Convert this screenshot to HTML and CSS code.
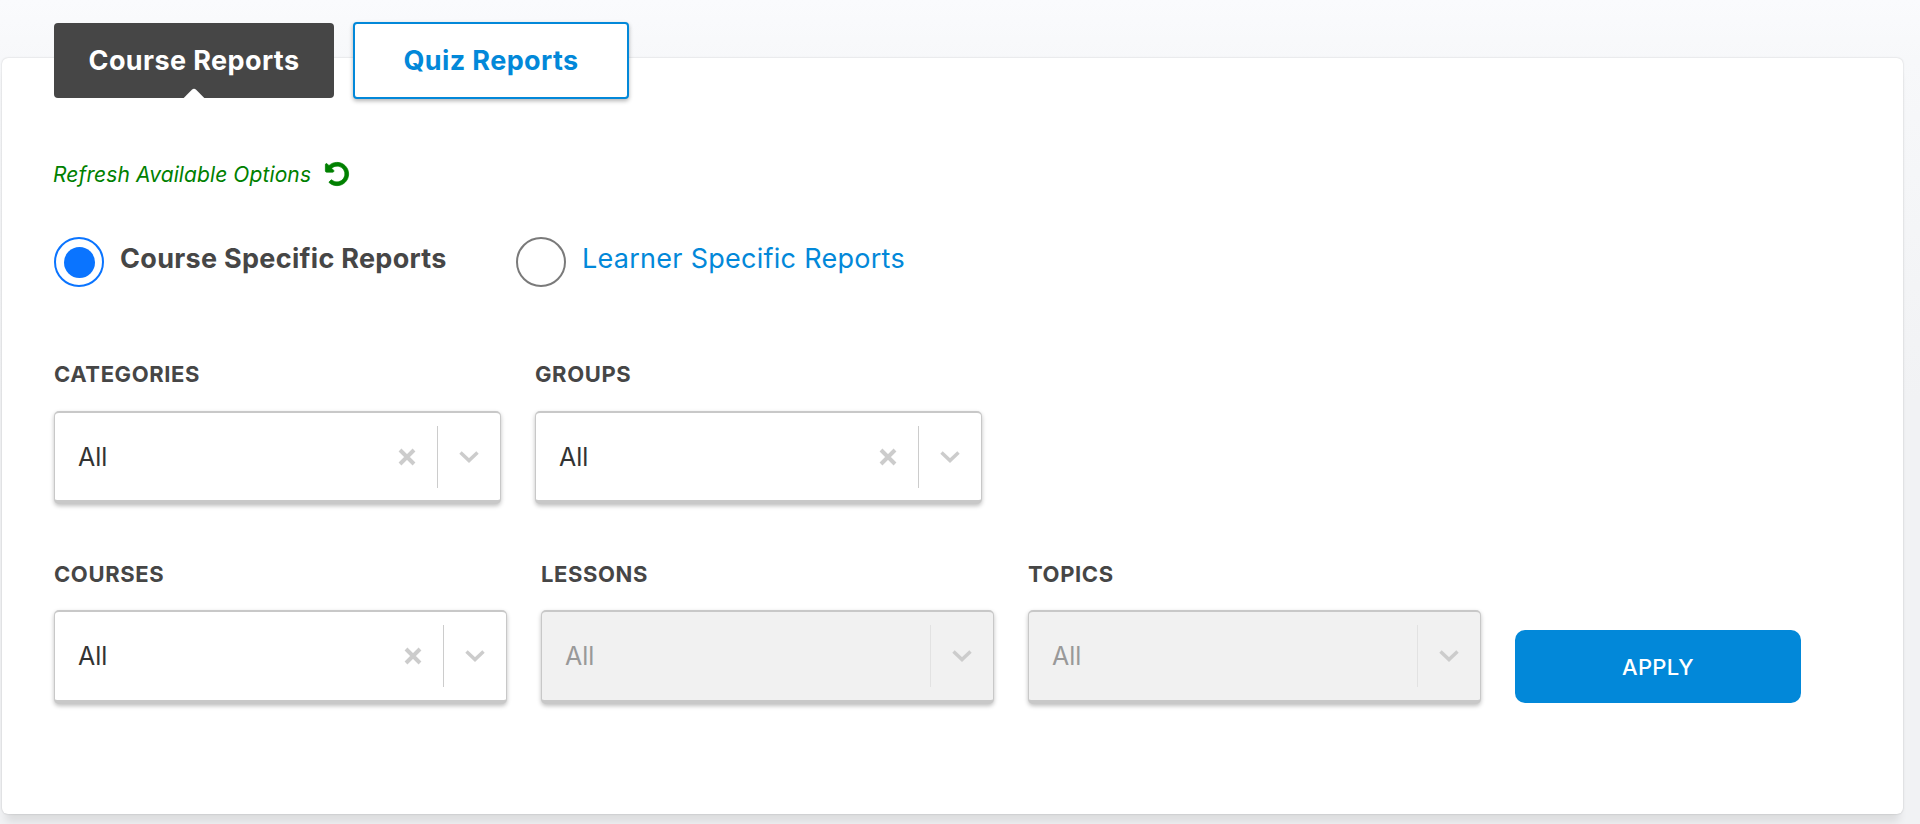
FILE: index.html
```html
<!DOCTYPE html>
<html lang="en">
<head>
<meta charset="utf-8">
<title>Reports</title>
<link rel="stylesheet" href="styles.css">
</head>
<body>
<main class="page">
  <nav class="tabs">
    <a class="tab tab-active">Course Reports</a>
    <a class="tab tab-idle">Quiz Reports</a>
  </nav>
  <section class="card">
    <div class="refresh">
      <span class="refresh-text">Refresh Available Options</span>
      <svg class="refresh-icon" viewBox="0 0 512 512"><path d="M255.545 8c-66.269.119-126.438 26.233-170.86 68.685L48.971 40.971C33.851 25.851 8 36.559 8 57.941V192c0 13.255 10.745 24 24 24h134.059c21.382 0 32.09-25.851 16.971-40.971l-41.75-41.75c30.864-28.899 70.801-44.907 113.23-45.273 92.398-.798 170.283 73.977 169.484 169.442C423.236 348.009 349.816 424 256 424c-41.127 0-79.997-14.678-110.63-41.556-4.743-4.161-11.906-3.908-16.368.553L89.34 422.659c-4.872 4.872-4.631 12.815.482 17.433C133.798 479.813 192.074 504 256 504c136.966 0 247.999-111.033 248-247.998C504.001 119.193 392.354 7.755 255.545 8z"/></svg>
    </div>
    <div class="radios">
      <label class="radio-item radio-first">
        <span class="radio radio-on"><span class="radio-dot"></span></span>
        <span class="radio-label label-on">Course Specific Reports</span>
      </label>
      <label class="radio-item">
        <span class="radio radio-off"></span>
        <span class="radio-label label-off">Learner Specific Reports</span>
      </label>
    </div>
    <div class="row row-one">
      <div class="field w-447">
        <div class="field-label">CATEGORIES</div>
        <div class="select">
          <span class="value">All</span>
          <svg class="clear" viewBox="0 0 20 20"><path d="M3 3 17 17M17 3 3 17"/></svg>
          <span class="sep"></span>
          <svg class="chev" viewBox="0 0 20 12"><path d="M1.5 1.5 10 9.5 18.500 1.500"/></svg>
        </div>
      </div>
      <div class="field w-447">
        <div class="field-label">GROUPS</div>
        <div class="select">
          <span class="value">All</span>
          <svg class="clear" viewBox="0 0 20 20"><path d="M3 3 17 17M17 3 3 17"/></svg>
          <span class="sep"></span>
          <svg class="chev" viewBox="0 0 20 12"><path d="M1.5 1.5 10 9.5 18.500 1.500"/></svg>
        </div>
      </div>
    </div>
    <div class="row row-two">
      <div class="field w-453">
        <div class="field-label">COURSES</div>
        <div class="select">
          <span class="value">All</span>
          <svg class="clear" viewBox="0 0 20 20"><path d="M3 3 17 17M17 3 3 17"/></svg>
          <span class="sep"></span>
          <svg class="chev" viewBox="0 0 20 12"><path d="M1.5 1.5 10 9.5 18.500 1.500"/></svg>
        </div>
      </div>
      <div class="field w-453">
        <div class="field-label">LESSONS</div>
        <div class="select select-off">
          <span class="value">All</span>
          <span class="sep"></span>
          <svg class="chev" viewBox="0 0 20 12"><path d="M1.5 1.5 10 9.5 18.500 1.500"/></svg>
        </div>
      </div>
      <div class="field w-453">
        <div class="field-label">TOPICS</div>
        <div class="select select-off">
          <span class="value">All</span>
          <span class="sep"></span>
          <svg class="chev" viewBox="0 0 20 12"><path d="M1.5 1.5 10 9.5 18.500 1.500"/></svg>
        </div>
      </div>
      <button class="apply">APPLY</button>
    </div>
  </section>
</main>
</body>
</html>
```
FILE: styles.css
```css
* { box-sizing: border-box; }
html, body { margin: 0; height: 100%; }
body {
  background: linear-gradient(#fafbfd 0, #f7f8fa 60px, #f1f2f4 400px, #f1f2f4 100%);
  font-family: Inter, "Open Sans", sans-serif;
  color: #464646;
  overflow: hidden;
}
.page { height: 824px; padding-top: 22px; }
.tabs {
  display: flex;
  align-items: flex-start;
  gap: 19px;
  margin-left: 54px;
  height: 36px;
  position: relative;
  z-index: 1;
}
.tab {
  height: 76px;
  border-radius: 4px;
  font-size: 27px;
  font-weight: 700;
  letter-spacing: 0.4px;
  display: flex;
  align-items: center;
  justify-content: center;
  position: relative;
}
.tab-active {
  width: 280px;
  margin-top: 1px;
  height: 75px;
  background: #464646;
  color: #fff;
}
.tab-active::after {
  content: "";
  position: absolute;
  left: 132px;
  bottom: -9px;
  width: 16px;
  height: 16px;
  background: #fff;
  transform: rotate(45deg);
  border-top-left-radius: 3px;
}
.tab-idle {
  width: 276px;
  height: 77px;
  background: #fff;
  border: 2px solid #0288d9;
  color: #0288d9;
  box-shadow: 0 2px 4px rgba(0,0,0,.3);
}
.card {
  width: 1901px;
  height: 756px;
  margin-left: 2px;
  background: #fff;
  border-radius: 6px;
  box-shadow: 0 0 2px rgba(0,0,0,.2), 0 12px 8px -4px rgba(0,0,0,.09);
  padding: 100px 0 0 52px;
}
.refresh { display: flex; align-items: center; height: 32px; margin-left: -1px; }
.refresh-text {
  font-style: italic;
  font-size: 21px;
  color: #008000;
  width: 272px;
  letter-spacing: 0.1px;
}
.refresh-icon { width: 24px; height: 24px; fill: #008000; stroke: #008000; stroke-width: 16; overflow: visible; }
.radios { display: flex; margin-top: 47px; height: 50px; }
.radio-item { display: flex; align-items: center; gap: 16px; }
.radio-first { width: 462px; }
.radio {
  width: 50px;
  height: 50px;
  border-radius: 50%;
  display: flex;
  align-items: center;
  justify-content: center;
  background: #fff;
}
.radio-on { border: 2px solid #0a74ff; }
.radio-off { border: 2px solid #7a7a7a; }
.radio-dot { width: 31px; height: 31px; border-radius: 50%; background: #0a74ff; }
.radio-label { font-size: 27px; margin-bottom: 7px; }
.label-on { font-weight: 700; letter-spacing: 0.3px; }
.label-off { color: #0288d9; font-weight: 400; letter-spacing: 0.27px; }
.row { display: flex; align-items: flex-start; }
.row-one { margin-top: 73px; gap: 34px; }
.row-two { margin-top: 56px; gap: 34px; }
.w-447 { width: 447px; }
.w-453 { width: 453px; }
.field-label {
  font-size: 22px;
  font-weight: 700;
  letter-spacing: 0.6px;
  line-height: 28px;
  height: 51px;
}
.row-two .field-label { height: 50px; }
.select {
  height: 93px;
  background: #fff;
  border-radius: 5px;
  border: 2px solid #c8c8c8;
  border-width: 2px 1px 4px;
  box-shadow: 0 2px 4px rgba(0,0,0,.25);
  display: flex;
  align-items: center;
  padding-left: 23px;
}
.row-two .select { height: 94px; }
.value { flex: 1; font-size: 25px; color: #333; }
.clear { width: 20px; height: 20px; fill: none; stroke: #ccc; stroke-width: 4; margin-right: 20px; }
.sep { width: 1px; height: 62px; background: #ccc; }
.chev { width: 20px; height: 12px; fill: none; stroke: #ccc; stroke-width: 3.5; margin: 0 21px; }
.select-off { background: #f1f1f1; }
.select-off .value { color: #999; }
.select-off .sep { background: #e2e2e2; }
.apply {
  width: 286px;
  height: 73px;
  margin: 70px 0 0;
  border: 0;
  border-radius: 10px;
  background: #0288d9;
  color: #fff;
  font-family: inherit;
  font-size: 22px;
  font-weight: 500;
  letter-spacing: 0.3px;
}
```
